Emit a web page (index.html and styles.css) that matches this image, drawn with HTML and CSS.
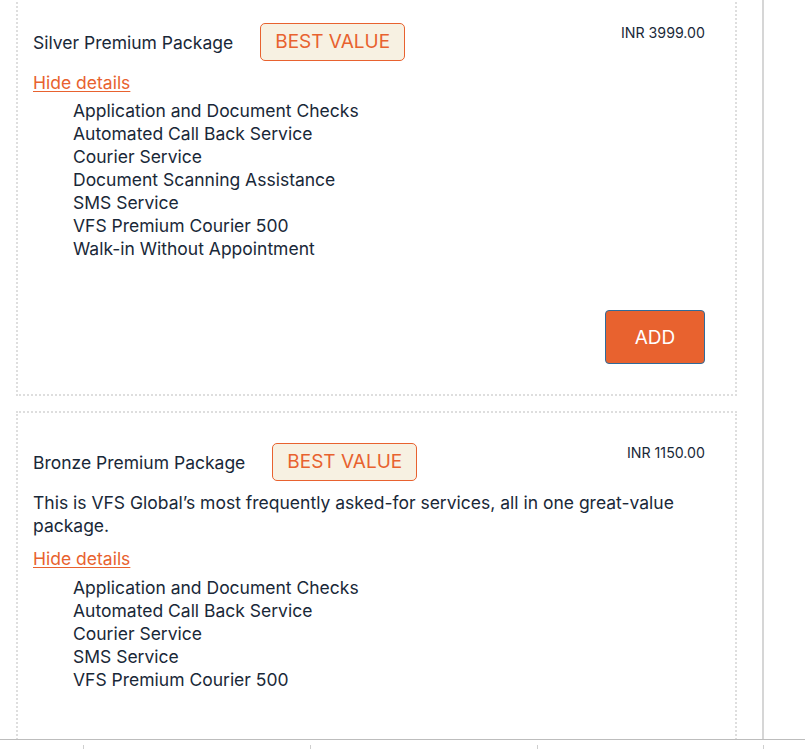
FILE: index.html
```html
<!DOCTYPE html>
<html lang="en">
<head>
<meta charset="utf-8">
<title>Packages</title>
<link rel="stylesheet" href="styles.css">
</head>
<body>
<div class="page">
  <div class="main">
    <div class="list">
      <section class="card card-silver">
        <div class="card-head">
          <div class="title-row">
            <span class="pkg-name">Silver Premium Package</span>
            <span class="badge">BEST VALUE</span>
          </div>
          <span class="price">INR 3999.00</span>
        </div>
        <a class="toggle" href="#">Hide details</a>
        <ul class="services">
          <li>Application and Document Checks</li>
          <li>Automated Call Back Service</li>
          <li>Courier Service</li>
          <li>Document Scanning Assistance</li>
          <li>SMS Service</li>
          <li>VFS Premium Courier 500</li>
          <li>Walk-in Without Appointment</li>
        </ul>
        <div class="actions">
          <button class="add-btn" type="button">ADD</button>
        </div>
      </section>
      <section class="card card-bronze">
        <div class="card-head">
          <div class="title-row">
            <span class="pkg-name">Bronze Premium Package</span>
            <span class="badge">BEST VALUE</span>
          </div>
          <span class="price">INR 1150.00</span>
        </div>
        <p class="desc">This is VFS Global’s most frequently asked-for services, all in one great-value package.</p>
        <a class="toggle" href="#">Hide details</a>
        <ul class="services">
          <li>Application and Document Checks</li>
          <li>Automated Call Back Service</li>
          <li>Courier Service</li>
          <li>SMS Service</li>
          <li>VFS Premium Courier 500</li>
        </ul>
      </section>
    </div>
  </div>
  <div class="footer">
    <span class="tick"></span>
    <span class="tick"></span>
    <span class="tick"></span>
    <span class="tick"></span>
  </div>
</div>
</body>
</html>
```
FILE: styles.css
```css
* { box-sizing: border-box; }
html, body { margin: 0; padding: 0; background: #fff; }
body {
  font-family: Inter, "Noto Sans", "Liberation Sans", sans-serif;
  color: #192838;
  font-size: 17.5px;
  line-height: 23px;
  overflow: hidden;
}
.page { width: 805px; height: 749px; overflow: hidden; }
.main {
  width: 764px;
  height: 739px;
  border-right: 2px solid #d6d6d6;
  overflow: hidden;
}
.list {
  margin-top: -9px;
  padding-left: 16px;
  display: flex;
  flex-direction: column;
  gap: 15px;
}
.card {
  width: 721px;
  border: 2px dotted #dedede;
  padding: 30px 30px 30px 15px;
}
.card-bronze { min-height: 400px; }
.card-head {
  display: flex;
  justify-content: space-between;
  align-items: flex-start;
}
.title-row {
  display: flex;
  align-items: center;
  gap: 27px;
}
.pkg-name { white-space: nowrap; }
.badge {
  display: inline-block;
  height: 38px;
  line-height: 36px;
  padding: 0 14px;
  border: 1px solid #e8622f;
  border-radius: 5px;
  background: #f7f1e2;
  color: #e8622f;
  font-size: 19px;
  white-space: nowrap;
}
.price {
  font-size: 14.2px;
  line-height: 20px;
  white-space: nowrap;
}
.toggle {
  display: inline-block;
  margin-top: 10px;
  color: #e8622f;
  text-decoration: underline;
  text-underline-offset: 2px;
}
.desc { margin: 10px 0 0; }
.card-bronze .toggle { margin-top: 10px; }
.services {
  list-style: none;
  margin: 5px 0 0;
  padding: 0 0 0 40px;
}
.card-bronze .services { margin-top: 6px; }
.actions {
  display: flex;
  justify-content: flex-end;
  margin-top: 50px;
}
.add-btn {
  width: 100px;
  height: 54px;
  background: #e8622f;
  color: #fff;
  border: 1px solid #2f6b9a;
  border-radius: 4px;
  font-family: inherit;
  font-size: 19px;
  cursor: pointer;
}
.footer {
  height: 10px;
  border-top: 1px solid #bdbdbd;
  display: grid;
  grid-template-columns: 83px 227px 227px 226px 1fr;
  padding-top: 5px;
}
.tick {
  height: 5px;
  border-left: 1px solid #cfcfcf;
}
.tick:first-child { grid-column: 2; }
```
